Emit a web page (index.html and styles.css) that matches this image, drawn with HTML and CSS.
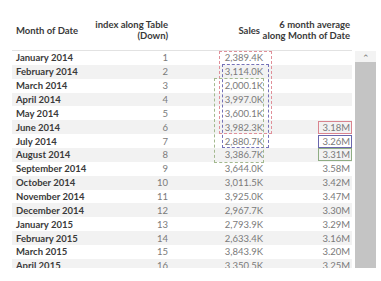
FILE: index.html
```html
<!DOCTYPE html>
<html>
<head>
    <title>Month of Date - 6 month average</title>
    <link rel="stylesheet" href="styles.css">
</head>
<body>
    <div class="view">
        <div class="table">
            <div class="head">
                <div class="hcell month">Month of Date</div>
                <div class="hcell num">index along Table<br>(Down)</div>
                <div class="hcell num sales-h">Sales</div>
                <div class="hcell num">6 month average<br>along Month of Date</div>
            </div>
            <div class="rows">
                <div class="row"><span class="month">January 2014</span><span class="idx">1</span><span class="val">2,389.4K</span><span class="avg"></span></div>
                <div class="row"><span class="month">February 2014</span><span class="idx">2</span><span class="val">3,114.0K</span><span class="avg"></span></div>
                <div class="row"><span class="month">March 2014</span><span class="idx">3</span><span class="val">2,000.1K</span><span class="avg"></span></div>
                <div class="row"><span class="month">April 2014</span><span class="idx">4</span><span class="val">3,997.0K</span><span class="avg"></span></div>
                <div class="row"><span class="month">May 2014</span><span class="idx">5</span><span class="val">3,600.1K</span><span class="avg"></span></div>
                <div class="row"><span class="month">June 2014</span><span class="idx">6</span><span class="val">3,982.3K</span><span class="avg"><em class="mark red">3.18M</em></span></div>
                <div class="row"><span class="month">July 2014</span><span class="idx">7</span><span class="val">2,880.7K</span><span class="avg"><em class="mark blue">3.26M</em></span></div>
                <div class="row"><span class="month">August 2014</span><span class="idx">8</span><span class="val">3,386.7K</span><span class="avg"><em class="mark green">3.31M</em></span></div>
                <div class="row"><span class="month">September 2014</span><span class="idx">9</span><span class="val">3,644.0K</span><span class="avg">3.58M</span></div>
                <div class="row"><span class="month">October 2014</span><span class="idx">10</span><span class="val">3,011.5K</span><span class="avg">3.42M</span></div>
                <div class="row"><span class="month">November 2014</span><span class="idx">11</span><span class="val">3,925.0K</span><span class="avg">3.47M</span></div>
                <div class="row"><span class="month">December 2014</span><span class="idx">12</span><span class="val">2,967.7K</span><span class="avg">3.30M</span></div>
                <div class="row"><span class="month">January 2015</span><span class="idx">13</span><span class="val">2,793.9K</span><span class="avg">3.29M</span></div>
                <div class="row"><span class="month">February 2015</span><span class="idx">14</span><span class="val">2,633.4K</span><span class="avg">3.16M</span></div>
                <div class="row"><span class="month">March 2015</span><span class="idx">15</span><span class="val">3,843.9K</span><span class="avg">3.20M</span></div>
                <div class="row"><span class="month">April 2015</span><span class="idx">16</span><span class="val">3,350.5K</span><span class="avg">3.25M</span></div>

                <!-- moving window outlines -->
                <div class="window win-red"></div>
                <div class="window win-blue"></div>
                <div class="window win-green"></div>
            </div>
        </div>
        <div class="scrollbar">
            <div class="scroll-up">&#8963;</div>
            <div class="scroll-thumb"></div>
        </div>
    </div>
</body>
</html>
```

FILE: styles.css
```css
body {
    margin: 0;
    background: #fff;
    font-family: Lato, "Liberation Sans", sans-serif;
    font-size: 9.5px;
}
.view {
    display: flex;
    padding-left: 12px;
}
.table {
    width: 340px;
}
.head {
    display: grid;
    grid-template-columns: 88px 70px 96px 86px;
    align-items: center;
    height: 50px;
    border-bottom: 1px solid #e2e2e2;
    color: #3a3a3a;
    font-weight: 700;
    line-height: 11px;
}
.hcell {
    padding-top: 10px;
    white-space: nowrap;
}
.hcell.month {
    padding-left: 4px;
}
.hcell.num {
    justify-self: end;
}
.num {
    text-align: right;
    padding-right: 2px;
}
.sales-h {
    padding-right: 6px;
}
.rows {
    position: relative;
    height: 217px;
    overflow: hidden;
}
.row {
    display: grid;
    grid-template-columns: 88px 70px 96px 86px;
    align-items: center;
    height: 13.87px;
    color: #7a7a7a;
}
.row:nth-child(even) {
    background: #f2f2f2;
}
.row .month {
    padding-left: 4px;
    color: #3a3a3a;
    font-weight: 700;
    white-space: nowrap;
}
.idx, .val, .avg {
    text-align: right;
    padding-right: 2px;
}
.val {
    padding-right: 3px;
}
.mark {
    font-style: normal;
    display: inline-block;
    width: 31px;
    padding-right: 1px;
    margin-right: -2px;
    line-height: 11px;
    border: 1px solid;
}
.mark.red { border-color: #d9848f; }
.mark.blue { border-color: #6a67ad; }
.mark.green { border-color: #8fad84; }

.window {
    position: absolute;
    border: 1px dashed;
}
.win-red {
    left: 207px;
    width: 51px;
    top: 0;
    height: 81px;
    border-color: #e0909a;
}
.win-blue {
    left: 210px;
    width: 45px;
    top: 13px;
    height: 82px;
    border-color: #7572b8;
}
.win-green {
    left: 202px;
    width: 48px;
    top: 27px;
    height: 83px;
    border-color: #a3b98f;
}

.scrollbar {
    margin-top: 51px;
    margin-left: 3px;
    width: 21px;
    height: 217px;
    display: flex;
    flex-direction: column;
}
.scroll-up {
    height: 11px;
    background: #f3f3f3;
    color: #777;
    font-size: 9px;
    line-height: 14px;
    text-align: center;
}
.scroll-thumb {
    flex-grow: 1;
    background: #c4c4c4;
}
```
